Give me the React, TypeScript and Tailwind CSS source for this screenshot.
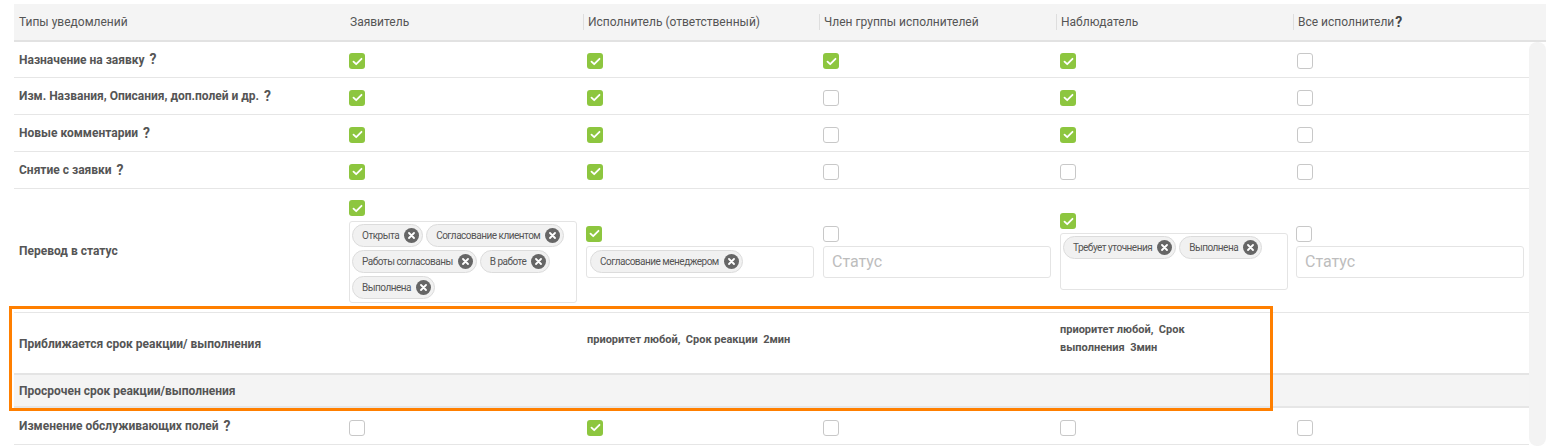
import React from "react";

const FONT = { fontFamily: "Roboto, 'Noto Sans', Arial, sans-serif" };

function Check({ on }: { on?: boolean }) {
  if (on) {
    return (
      <div className="w-[16px] h-[16px] rounded-[3px] bg-[#8dc63f] flex items-center justify-center shrink-0">
        <svg width="11" height="9" viewBox="0 0 11 9" fill="none">
          <path d="M1.5 4.6 L4.2 7.2 L9.5 1.8" stroke="#fff" strokeWidth="1.8" strokeLinecap="round" strokeLinejoin="round" />
        </svg>
      </div>
    );
  }
  return <div className="w-[16px] h-[16px] rounded-[3px] border border-[#c8c8c8] bg-white shrink-0" />;
}

function Tag({ label }: { label: string }) {
  return (
    <div className="h-[23px] rounded-full border border-[#dcdcdc] bg-[#f1f1f1] pl-[9px] pr-[3px] flex items-center gap-[5px] text-[10px] tracking-[-0.5px] text-[#555]">
      <span>{label}</span>
      <span className="w-[15px] h-[15px] rounded-full bg-[#666] flex items-center justify-center">
        <svg width="7" height="7" viewBox="0 0 7 7">
          <path d="M1 1 L6 6 M6 1 L1 6" stroke="#fff" strokeWidth="1.8" strokeLinecap="round" />
        </svg>
      </span>
    </div>
  );
}

function Q() {
  return <span className="ml-[5px] text-[14px] font-bold text-[#555]">?</span>;
}

const COLS = "grid grid-cols-[331px_238px_236px_237px_237px_236px]";

function Row({
  label,
  q,
  checks,
  h,
}: {
  label: string;
  q?: boolean;
  checks: boolean[];
  h: string;
}) {
  return (
    <div className={`${COLS} ${h} border-b border-[#e6e6e6] items-center`}>
      <div className="pl-[5px] text-[12px] font-bold text-[#555] flex items-center">
        {label}
        {q && <Q />}
      </div>
      {checks.map((c, i) => (
        <div key={i} className="pl-[4px] pt-[3px]">
          <Check on={c} />
        </div>
      ))}
    </div>
  );
}

export default function App() {
  return (
    <div className="w-[1546px] h-[448px] bg-white overflow-hidden relative" style={FONT}>
      <div className="pt-[4px] pl-[14px]">
        {/* Header */}
        <div className="grid grid-cols-[331px_238px_236px_237px_237px_253px] h-[38px] bg-[#f4f4f4] border-b-2 border-[#e2e2e2] items-center text-[12px] text-[#555]">
          <div className="pl-[5px]">Типы уведомлений</div>
          <div className="pl-[5px]">Заявитель</div>
          <div className="border-l border-[#dedede] pl-[4px] leading-[16px]">Исполнитель (ответственный)</div>
          <div className="border-l border-[#dedede] pl-[4px] leading-[16px]">Член группы исполнителей</div>
          <div className="border-l border-[#dedede] pl-[4px] leading-[16px]">Наблюдатель</div>
          <div className="border-l border-[#dedede] pl-[4px] leading-[16px] flex items-center">
            Все исполнители<span className="ml-[1px] text-[14px] font-bold text-[#444]">?</span>
          </div>
        </div>

        {/* Body */}
        <div className="flex">
          <div className="w-[1515px]">
            <Row label="Назначение на заявку" q checks={[true, true, true, true, false]} h="h-[36px]" />
            <Row label="Изм. Названия, Описания, доп.полей и др." q checks={[true, true, false, true, false]} h="h-[37px]" />
            <Row label="Новые комментарии" q checks={[true, true, false, true, false]} h="h-[37px]" />
            <Row label="Снятие с заявки" q checks={[true, true, false, false, false]} h="h-[37px]" />

            {/* Перевод в статус */}
            <div className={`${COLS} h-[124px] border-b border-[#e6e6e6] items-center`}>
              <div className="pl-[5px] text-[12px] font-bold text-[#555]">Перевод в статус</div>
              <div className="pl-[4px] flex flex-col gap-[5px] pt-[2px]">
                <Check on />
                <div className="w-[228px] h-[82px] border border-[#e4e4e4] rounded-[3px] p-[2px] flex flex-wrap content-start gap-[3px]">
                  <Tag label="Открыта" />
                  <Tag label="Согласование клиентом" />
                  <Tag label="Работы согласованы" />
                  <Tag label="В работе" />
                  <Tag label="Выполнена" />
                </div>
              </div>
              <div className="pl-[3px] flex flex-col gap-[4px] pt-[2px]">
                <Check on />
                <div className="w-[228px] h-[32px] border border-[#e4e4e4] rounded-[3px] p-[3px] flex flex-wrap gap-[3px]">
                  <Tag label="Согласование менеджером" />
                </div>
              </div>
              <div className="pl-[4px] flex flex-col gap-[4px] pt-[2px]">
                <Check />
                <div className="w-[228px] h-[32px] border border-[#e4e4e4] rounded-[3px] pl-[8px] flex items-center text-[16px] text-[#bdbdbd]">
                  Статус
                </div>
              </div>
              <div className="pl-[4px] flex flex-col gap-[4px] pt-[2px]">
                <Check on />
                <div className="w-[228px] h-[57px] border border-[#e4e4e4] rounded-[3px] p-[2px] flex flex-wrap content-start gap-[3px]">
                  <Tag label="Требует уточнения" />
                  <Tag label="Выполнена" />
                </div>
              </div>
              <div className="pl-[3px] flex flex-col gap-[4px] pt-[2px]">
                <Check />
                <div className="w-[228px] h-[32px] border border-[#e4e4e4] rounded-[3px] pl-[8px] flex items-center text-[16px] text-[#bdbdbd]">
                  Статус
                </div>
              </div>
            </div>

            {/* Приближается */}
            <div className={`${COLS} h-[62px] border-b-2 border-[#e4e4e4] items-center`}>
              <div className="pl-[5px] pt-[2px] text-[12px] font-bold text-[#555]">Приближается срок реакции/ выполнения</div>
              <div />
              <div className="pl-[4px] text-[11px] font-bold text-[#555] whitespace-pre pb-[6px]">приоритет любой,  Срок реакции  2мин</div>
              <div />
              <div className="pl-[4px] text-[11px] font-bold text-[#555] leading-[18px] whitespace-pre pb-[8px]">
                {"приоритет любой,  Срок\nвыполнения  3мин"}
              </div>
              <div />
            </div>

            {/* Просрочен */}
            <div className="h-[33px] bg-[#f4f4f4] border-b-2 border-[#e6e6e6] flex items-center pl-[5px] text-[12px] font-bold text-[#555]">
              Просрочен срок реакции/выполнения
            </div>

            <Row label="Изменение обслуживающих полей" q checks={[false, true, false, false, false]} h="h-[37px]" />
          </div>
          <div className="w-[17px] h-[404px] bg-[#f3f3f3] rounded-t-[8px] rounded-b-[8px]" />
        </div>
      </div>

      {/* Orange highlight */}
      <div className="absolute left-[9px] top-[306px] w-[1264px] h-[105px] border-[3px] border-[#ff7f00] pointer-events-none" />
    </div>
  );
}
